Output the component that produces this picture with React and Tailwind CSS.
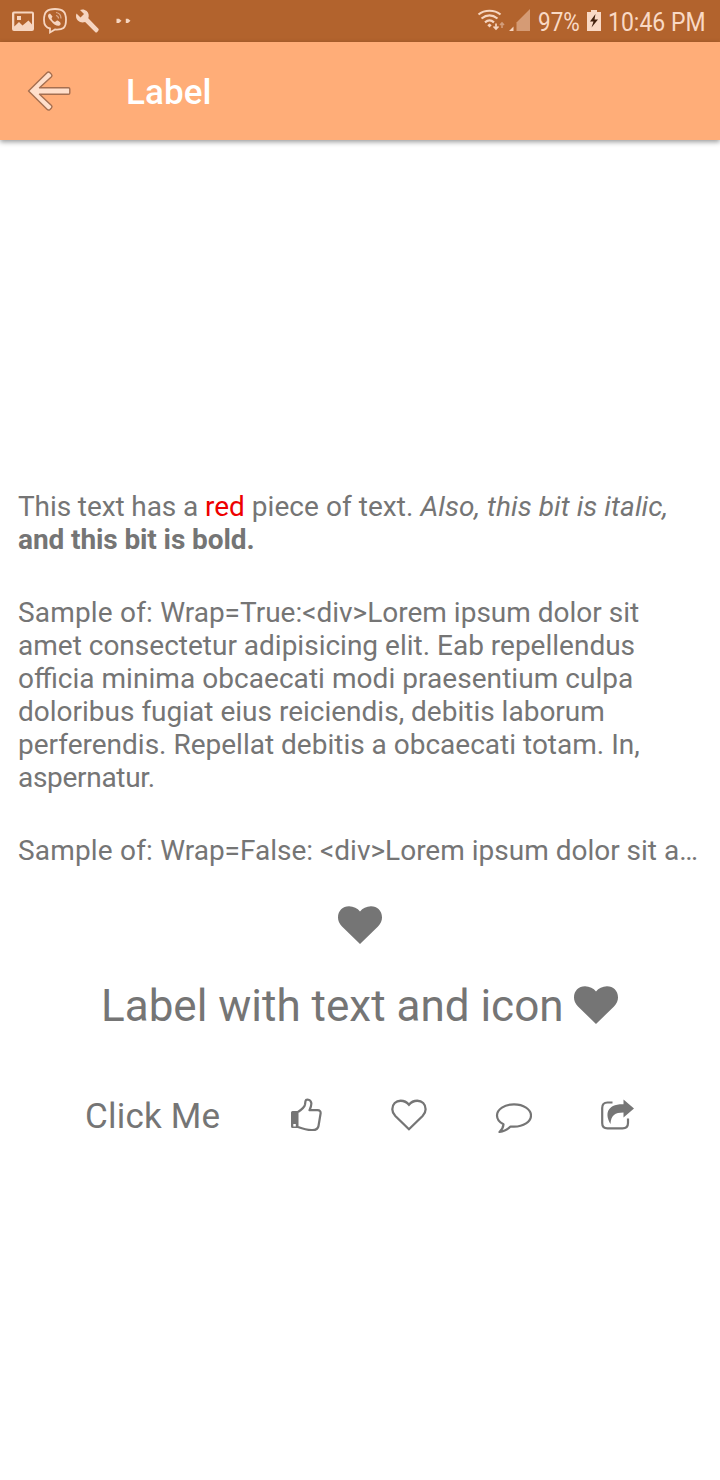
const heart =
  "M22 38L4 20.500C1.200 17.600 0 14.600 0 11.500C0 4.700 4.800.3 11 .3C15.500.3 19.500 2.400 22 5.500C24.500 2.400 28.500.3 33 .3C39.200.3 44 4.700 44 11.500C44 14.600 42.800 17.600 40 20.500Z";

function Heart({ className }) {
  return (
    <svg width="44" height="38" viewBox="0 0 44 38" fill="#757575" className={className}>
      <path d={heart} />
    </svg>
  );
}

function StatusBar() {
  return (
    <div className="flex h-[42px] shrink-0 items-center bg-[#b2632d] text-[#f9d9c5]">
      <svg width="140" height="42" viewBox="0 0 140 42" fill="#f6d5c0">
        <path fillRule="evenodd" d="M14 11.500h18a2 2 0 0 1 2 2v15.500a2 2 0 0 1-2 2H14a2 2 0 0 1-2-2V13.500a2 2 0 0 1 2-2zM14.300 13.500v13l4.700-4.500 3.500 3.500 6-5 3.500 4v-11zM17 16h4v4h-4z" />
        <path d="M50 28.500c-5-1-6-4-6-8.500 0-8 3-11 11-11s11 3 11 11-3 10-11 9.500l-5 3z" fill="none" stroke="#f6d5c0" strokeWidth="1.800" />
        <path d="M50 13.500c-3 1-2.500 4 1 7.500 4 5 8 6 9.500 3.500 1-2-2.500-4-3.500-4l-2 1.500c-1.500-.5-3-2-3.500-3.500l1-2z" />
        <path d="M56 12.500c3.500.5 5 3 5 6M56 15.500c1.500.3 2.500 1.200 2.500 3" fill="none" stroke="#dfae91" strokeWidth="1.200" />
        <path d="M98.200 28.500L88.300 18.200c1-2.800.3-5.500-1.600-7.200-2-1.800-4.500-2-6.700-1.100l4 4-3.500 3.500-4-4c-1 2.400-.5 5 1.300 7 2 1.900 4.700 2.500 7.300 1.500l10 10.100c.7.700 1.500.7 2.200 0l.9-1.300c.7-.7.700-1.500 0-2.200z" />
        <path d="M116.500 18.800h2.500l2.500 2-2.500 2.200h-2.500zM125.800 18.800h2.200l2.500 2-2.500 2.200h-2.200z" />
      </svg>
      <svg width="56" height="42" viewBox="0 0 56 42" className="ml-auto" fill="none" stroke="#f6d5c0" strokeWidth="2.200">
        <path d="M2.500 14.500c6-5 16-5 22 0M5.500 18.500c5-4 11-4 16 0M9 22.300c3-2.500 6-2.500 9 0" />
        <path d="M11.300 25.200l2.200-1.700 2.200 1.700-2.200 2.300zM33 31l4.500-4.500V31z" fill="#f6d5c0" stroke="none" />
        <path d="M20 23.500V29m-2.500-2.500L20 29l2.500-2.500" strokeWidth="1.700" />
        <path d="M26 28v-5m-2 2l2-2 2 2" stroke="#d29d7b" strokeWidth="1.600" />
        <path d="M40.500 31V22.500L54 9v22z" fill="#d59b75" stroke="none" />
      </svg>
      <span className="ml-[6px] w-[42px] whitespace-nowrap pt-[2px] text-[25px] leading-none"><span className="inline-block origin-left scale-x-[0.9]">97%</span></span>
      <svg width="14" height="42" viewBox="0 0 14 42" className="ml-[7px]">
        <path d="M0 12h4v-2h6v2h4v19H0z" fill="#f9d9c5" />
        <path d="M8.500 14L3 21.500h3.500L4.500 27.500 11 19.500H7.500z" fill="#42210e" />
      </svg>
      <span className="ml-[7px] mr-[14px] w-[98px] whitespace-nowrap pt-[2px] text-[25px] leading-none"><span className="inline-block origin-left scale-x-[0.92]">10:46 PM</span></span>
    </div>
  );
}

export default function App() {
  return (
    <div className="flex h-[1480px] w-[720px] flex-col overflow-hidden bg-white font-[Roboto,sans-serif] text-[28px] leading-[33px] text-[#757575]">
      <StatusBar />
      <header className="flex h-[98px] shrink-0 items-center bg-[#ffad78] shadow-[0_2px_5px_rgba(0,0,0,0.4)]">
        <svg width="44" height="42" viewBox="0 0 44 42" className="ml-[27px]">
          <path
            d="M1.500 21L20 2.700Q21.500 1.200 23 2.700L24.500 4.400Q25.500 5.600 24.500 6.700L12.500 17.800H41.500Q42.800 17.800 42.800 19V23Q42.800 24.200 41.500 24.200H12.500L24.500 35.500Q25.500 36.700 24.500 37.900L23 39.400Q21.500 40.800 20 39.300Z"
            fill="#ffdfcb"
            stroke="#a56f50"
            strokeWidth="1.400"
            strokeLinejoin="round"
          />
        </svg>
        <h1 className="ml-[55px] pt-[2px] text-[35px] font-medium tracking-[0.1px] text-white">Label</h1>
      </header>
      <main className="flex flex-col pt-[350px]">
        <p className="ml-[18px] whitespace-nowrap">
          <span className="tracking-[-0.1px]">This text has a </span><span className="text-[#ee0000]">red</span> <span className="tracking-[0.05px]">piece of text. </span><i className="tracking-[0.08px]">Also, this bit is italic,</i>
          <br />
          <b className="tracking-[-0.1px]">and this bit is bold.</b>
        </p>
        <p className="ml-[18px] mt-[40px] whitespace-nowrap">
          <span className="tracking-[0.18px]">Sample of: </span>Wrap=True:&lt;div&gt;Lorem ipsum dolor sit
          <br />amet consectetur adipisicing elit. Eab repellendus
          <br />officia <span className="tracking-[0.05px]">minima obcaecati modi praesentium culpa</span>
          <br />doloribus fugiat eius reiciendis, debitis laborum
          <br />perferendis. Repellat debitis a obcaecati totam. In,
          <br /><span className="tracking-[-0.3px]">aspernatur.</span>
        </p>
        <p className="ml-[18px] mt-[40px] whitespace-nowrap"><span className="tracking-[0.18px]">Sample of: </span>Wrap=False: &lt;div&gt;Lorem ipsum dolor sit a…</p>
        <Heart className="ml-[338px] mt-[39px]" />
        <div className="ml-[101px] mt-[35px] flex h-[52px] items-center whitespace-nowrap text-[44px]">
          <span className="w-[473px] pt-[2px]">Label with text and icon</span>
          <Heart />
        </div>
        <div className="mt-[61px] flex h-[46px] items-center">
          <span className="ml-[85px] w-[205px] pt-[2px] text-[35px] tracking-[0.2px]">Click Me</span>
          <svg width="32" height="34" viewBox="0 0 32 34" fill="none" stroke="#757575" strokeWidth="2.200" strokeLinejoin="round">
            <path d="M8 14C11 12 14.500 9.500 15 6.500L15.500 3C16 .8 20.800 1.200 21.300 5C21.600 7.500 20.500 10 19.500 12.200H27.500C29.800 12.200 31 13.500 30.500 16L28.500 28C28 31.500 25.500 32.200 21.500 32C16 32 12 30.500 8 29" />
            <path fillRule="evenodd" d="M2.500 13H8.500V30H2.500Q1 30 1 28.500V14.500Q1 13 2.500 13ZM3.300 26V28.500H5.800V26Z" fill="#757575" stroke="none" />
          </svg>
          <svg width="36" height="32" viewBox="0 0 44 38" className="ml-[69px]" fill="none" stroke="#757575" strokeWidth="3">
            <path d={heart} transform="translate(1.600 1.300) scale(.925)" />
          </svg>
          <svg width="37" height="32" viewBox="0 0 37 32" className="ml-[68px] mt-[5px]" fill="none" stroke="#757575" strokeWidth="2.200" strokeLinejoin="round">
            <path d="M8.500 22.300C4.500 20.300 2 17 2 13.500C2 7.300 9.500 2.300 19 2.300S36 7.300 36 13.500 28.500 24.700 19 24.700C18 24.700 16.500 24.600 15.500 24.500C12.500 27.500 8.500 29.500 4.500 30C7 27.500 8.300 25 8.500 22.300Z" />
          </svg>
          <svg width="34" height="32" viewBox="0 0 34 32" className="ml-[69px]" fill="none" stroke="#757575" strokeWidth="2.200">
            <path d="M11.500 3.500H6.500Q1.200 3.500 1.200 9V24Q1.200 29.400 6.500 29.400H21.500Q27 29.400 27 24V19.500" />
            <path d="M22.500 .5L33 9.500L22.500 18.500V13.500C14 13.500 10 16 9.500 25C4 16 5 5 22.500 5.300Z" fill="#757575" stroke="none" />
          </svg>
        </div>
      </main>
    </div>
  );
}
